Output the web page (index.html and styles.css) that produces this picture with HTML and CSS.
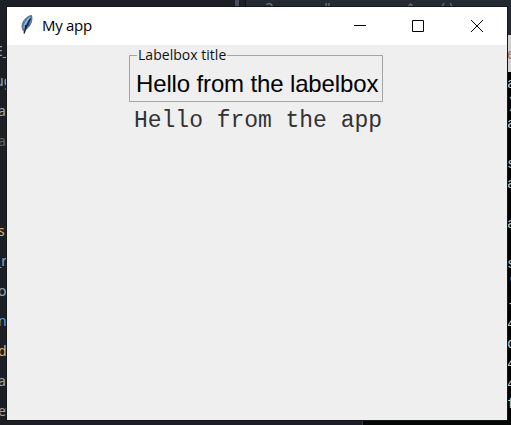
FILE: index.html
```html
<!DOCTYPE html>
<html lang="en">
<head>
<meta charset="utf-8">
<title>My app</title>
<link rel="stylesheet" href="styles.css">
</head>
<body>
<div class="desktop">
  <div class="editor-top"><span class="c1">2</span><span class="c2">"</span><span class="c3">^</span><span class="c4">()</span></div>
  <div class="scroll-thumb"></div>
  <div class="code-left">
    <span class="pair">E_</span><span class="pair">ug</span><span>a</span><span class="dim">a</span><span></span><span></span><span class="gold">s</span><span class="pair">_r</span><span>o</span><span class="blue">n</span><span class="gold">d</span><span>at</span><span>ev</span>
  </div>
  <div class="terminal">
    <div class="terminal-tab">e</div>
    <div class="terminal-text">
      <span>a</span><span>)</span><span>a</span><span></span><span>s</span><span>a</span><span></span><span>a</span><span></span><span>s</span><span>'</span><span>-</span><span>4</span><span>d</span><span>4</span><span>4</span><span>f</span>
    </div>
  </div>
  <div class="bottom-editor"></div>
  <div class="bottom-terminal"></div>

  <main class="window">
    <header class="titlebar">
      <svg class="feather" width="14" height="20" viewBox="0 0 14 20">
        <path d="M10.500.5C6 1 1 6 1 12L2.500 16 6 13.500C9 11 12 6 10.500.5Z" fill="#4a82bd" stroke="#62666c"/>
        <path d="M9 2.500C6 5 4 8 3 13" fill="none" stroke="#8fbdea" stroke-width="1.500"/>
        <path d="M9.500 3.500C7 8 5 11 3 18.500M7 7.500v3M4.500 10v4" fill="none" stroke="#16202b" stroke-width="1.300"/>
      </svg>
      <h1 class="title">My app</h1>
      <div class="controls">
        <svg width="58" height="38" viewBox="0 0 58 38"><path d="M23 18.500h12"/></svg>
        <svg width="58" height="38" viewBox="0 0 58 38"><path d="M23.500 13.500h11v11h-11z"/></svg>
        <svg width="58" height="38" viewBox="0 0 58 38"><path d="M24 13l12 12M36 13L24 25"/></svg>
      </div>
    </header>
    <section class="content">
      <fieldset class="labelbox">
        <legend>Labelbox title</legend>
        <p class="box-text">Hello from the labelbox</p>
      </fieldset>
      <p class="app-text">Hello from the app</p>
    </section>
  </main>
</div>
</body>
</html>
```
FILE: styles.css
```css
* { box-sizing: border-box; }
body { margin: 0; }
p, h1 { margin: 0; font-weight: normal; }
.desktop { position: relative; width: 511px; height: 425px; overflow: hidden; background: #1c2025; }
.editor-top { position: absolute; left: 245px; top: 0; width: 266px; height: 36px; background: #252932; border-left: 1px solid #111419; color: #6b7078; font: 15px/18px "DejaVu Sans Mono", monospace; }
.editor-top span { position: absolute; top: 1px; }
.editor-top .c1 { left: 19px; }
.editor-top .c2 { left: 77px; }
.editor-top .c3 { left: 160px; }
.editor-top .c4 { left: 192px; }
.scroll-thumb { position: absolute; left: 235px; top: 0; width: 4px; height: 7px; background: #495060; }
.code-left { position: absolute; left: 0; top: 36px; width: 7px; overflow: hidden; display: flex; flex-direction: column; align-items: flex-start; color: #9aa5b4; font: 14px/30px "Noto Sans", sans-serif; }
.code-left span { height: 30px; margin-left: -2px; }
.code-left .pair { margin-left: -5px; }
.code-left .dim { color: #59616c; }
.code-left .gold { color: #d7b473; }
.code-left .blue { color: #6c9bc8; }
.terminal { position: absolute; left: 507px; top: 35px; width: 4px; height: 390px; overflow: hidden; background: #000; }
.terminal-tab { height: 37px; overflow: hidden; background: #d2d2d2; color: #8b7570; font: 15px/38px "Liberation Sans", sans-serif; }
.terminal-text { display: flex; flex-direction: column; padding-top: 3px; color: #c5c5c5; font: 15px/20px "Liberation Mono", monospace; }
.terminal-text span { height: 20px; }
.bottom-editor { position: absolute; left: 0; top: 420px; width: 362px; height: 5px; background: #1b1f25; }
.bottom-terminal { position: absolute; left: 362px; top: 420px; width: 149px; height: 5px; background: #050606; border-left: 1px solid #33373a; }
.window { position: absolute; left: 7px; top: 7px; width: 500px; height: 413px; background: #efefef; box-shadow: 0 0 0 1px #15181b; }
.titlebar { display: flex; height: 38px; background: #fff; padding-left: 14px; }
.feather { margin-top: 8px; }
.title { margin-left: 7px; font: 15px/37px "Open Sans", sans-serif; color: #000; letter-spacing: -0.3px; }
.controls { display: flex; margin-left: auto; margin-right: 2px; }
.controls svg { fill: none; stroke: #000; stroke-width: 1; }
.content { display: flex; flex-direction: column; align-items: center; }
.labelbox { width: 254px; height: 55px; margin: 2px 2px 0 0; padding: 0 0 0 6px; border: 1px solid #a5a5a5; }
.labelbox legend { margin-left: 1px; padding: 0 1px; font: 14px/16px "Open Sans", sans-serif; color: #111; white-space: nowrap; letter-spacing: 0.03px; }
.box-text { font: 24px/30px "Liberation Sans", sans-serif; color: #000; white-space: nowrap; margin-top: 6px; letter-spacing: -0.14px; }
.app-text { margin: 5px 0 0 2px; font: 23px/28px "Liberation Mono", monospace; color: #333; white-space: nowrap; letter-spacing: -0.03px; }
```
